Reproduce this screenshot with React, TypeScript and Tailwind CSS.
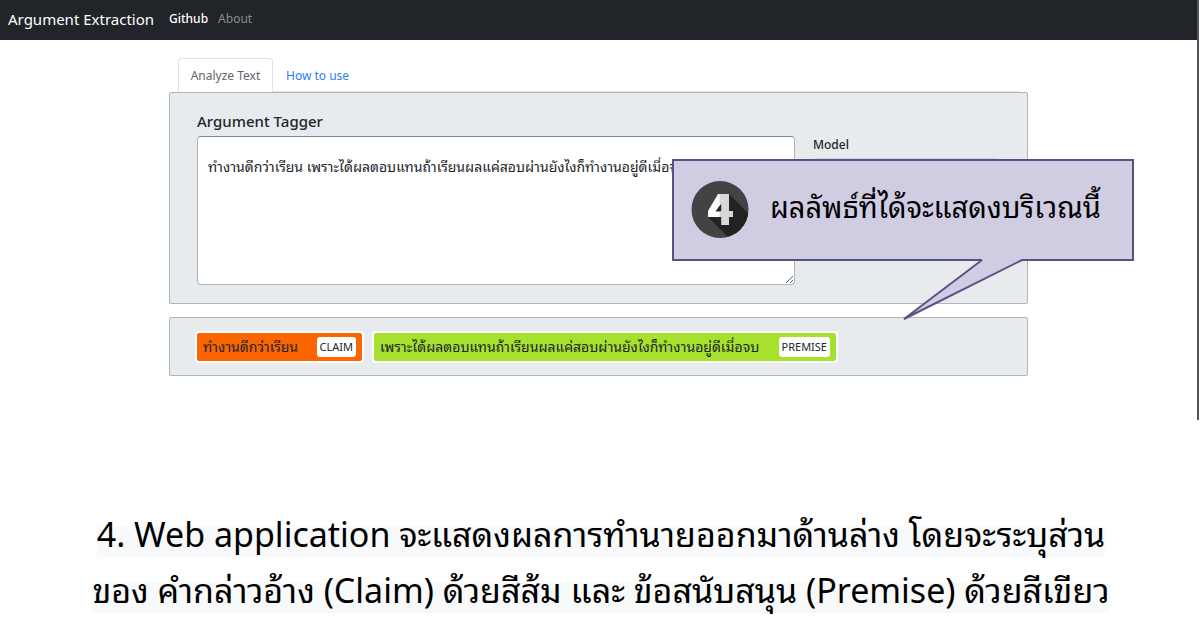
import React, { useState } from "react";

const SAMPLE =
  "\nทำงานดีกว่าเรียน เพราะได้ผลตอบแทนถ้าเรียนผลแค่สอบผ่านยังไงก็ทำงานอยู่ดีเมื่อจบ";

function Navbar() {
  return (
    <nav className="flex h-10 items-center bg-[#212529] px-2 pb-0.5 text-white">
      <a href="#" className="mr-[15px] text-[15px] leading-6">
        Argument Extraction
      </a>
      <a href="#github" className="mr-2.5 text-xs font-medium">
        Github
      </a>
      <a href="#about" className="text-xs text-[#8b8d8f]">
        About
      </a>
    </nav>
  );
}

function Tabs() {
  return (
    <div className="mx-[9px] flex h-[34px] border-b border-[#dee2e6] text-xs">
      <button className="-mb-px w-[95px] rounded-t-[4px] border border-b-0 border-[#dee2e6] bg-white text-[#5f656b]">
        Analyze Text
      </button>
      <button className="px-[13px] pt-0.5 text-[#2f7df6]">How to use</button>
    </div>
  );
}

interface TagProps {
  text: string;
  label: string;
  tone: string;
}

function Tag({ text, label, tone }: TagProps) {
  return (
    <span
      className={`flex h-8 shrink-0 items-center justify-between whitespace-nowrap rounded-[4px] border-2 border-white px-1.5 ${tone}`}
    >
      <span className="text-sm leading-5">{text}</span>
      <span className="rounded-[3px] bg-white px-[3px] text-[11px] leading-5 text-[#212529]">
        {label}
      </span>
    </span>
  );
}

function NumberBadge() {
  return (
    <svg viewBox="0 0 58 58" className="size-[58px] shrink-0" aria-hidden="true">
      <defs>
        <clipPath id="disc">
          <circle cx="29" cy="28.5" r="28.5" />
        </clipPath>
      </defs>
      <circle cx="29" cy="28.5" r="28.5" fill="#434343" />
      <path d="M38 13 60 35V60H41L17 36Z" fill="#222" clipPath="url(#disc)" />
      <path
        d="M27 13H38V30H42V36H38V44H30.500V36H17V30ZM30.500 22 24.500 30.500H30.500Z"
        fill="#f8fffb"
        fillRule="evenodd"
      />
      <path d="M28.500 13H38V30H42V36H38V44H30.500V36H28.500V30.500H30.500V22L28.500 25Z" fill="#d8d8d8" />
    </svg>
  );
}

function Callout() {
  return (
    <div className="absolute left-[502px] top-[66px] w-[462px]">
      <div className="flex h-[102px] items-start border-2 border-[#5a5083] bg-[#d0cde3] pl-[17px] pt-5">
        <NumberBadge />
        <p className="ml-[21px] whitespace-nowrap pt-0.5 text-[29px] leading-[48px] text-black">
          ผลลัพธ์ที่ได้จะแสดงบริเวณนี้
        </p>
      </div>
      <svg
        viewBox="0 0 130 66"
        className="absolute left-[226px] top-[98px] h-[66px] w-[130px]"
        aria-hidden="true"
      >
        <path d="M84 0V3L6 62L124 3V0Z" fill="#d0cde3" />
        <path d="M84 3L6 62L124 3" fill="none" stroke="#5a5083" strokeWidth="2" />
      </svg>
    </div>
  );
}

function Tagger() {
  const [text, setText] = useState(SAMPLE);
  return (
    <section className="relative rounded-[2px] border border-[#adb5bd] bg-[#e7ebee] px-[27px] pb-[18px] pt-4">
      <label htmlFor="input-text" className="block text-[15px] font-medium leading-6">
        Argument Tagger
      </label>
      <div className="mt-[3px] flex gap-[18px]">
        <textarea
          id="input-text"
          value={text}
          onChange={(e) => setText(e.target.value)}
          className="block h-[149px] w-[598px] resize overflow-hidden whitespace-pre rounded-[4px] border border-[#adb5bd] border-t-[#7d8790] bg-white px-2.5 text-sm leading-5"
        />
        <div className="min-w-0 flex-1">
          <label htmlFor="model" className="block text-xs font-medium leading-[18px]">
            Model
          </label>
          <select
            id="model"
            className="mt-1 h-7 w-full rounded-[4px] border border-[#ced4da] bg-white"
          />
        </div>
      </div>
      <Callout />
    </section>
  );
}

export default function App() {
  return (
    <div className="bg-white font-['Noto_Sans','Noto_Sans_Thai_Looped','Loma','Garuda','Waree','Umpush','Leelawadee_UI','Tahoma','Noto_Sans_Thai',sans-serif] text-[#212529]">
      <div className="mr-[3px] min-h-[420px] border-r-2 border-[#555]">
        <Navbar />
        <main className="mx-auto max-w-[859px] pt-[18px]">
          <Tabs />
          <Tagger />
          <section className="mt-[13px] flex h-[59px] items-center gap-2 rounded-[2px] border border-[#adb5bd] bg-[#e7ebee] px-[25px]">
            <Tag text="ทำงานดีกว่าเรียน" label="CLAIM" tone="w-[169px] bg-[#fb6502]" />
            <Tag
              text="เพราะได้ผลตอบแทนถ้าเรียนผลแค่สอบผ่านยังไงก็ทำงานอยู่ดีเมื่อจบ"
              label="PREMISE"
              tone="w-[466px] bg-[#a6e22d]"
            />
          </section>
        </main>
      </div>
      <p className="pt-[86px] text-center text-[34px] leading-[56px] text-black">
        <span className="bg-[linear-gradient(#f8f9fa,#f8f9fa)] bg-[length:100%_30px] bg-bottom bg-no-repeat box-decoration-clone">
          4. Web application จะแสดงผลการทำนายออกมาด้านล่าง โดยจะระบุส่วน
          <br />
          ของ คำกล่าวอ้าง (Claim) ด้วยสีส้ม และ ข้อสนับสนุน (Premise) ด้วยสีเขียว
        </span>
      </p>
    </div>
  );
}
